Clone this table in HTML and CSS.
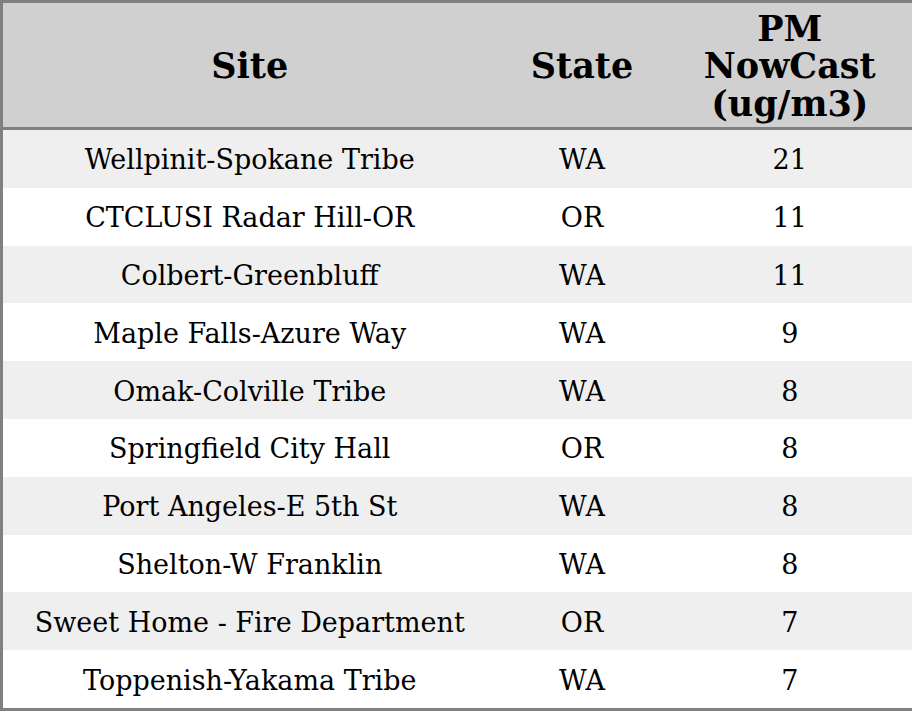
FILE: index.html
```html
<!DOCTYPE html>
<html>
<head>
<meta charset="utf-8">
<link rel="stylesheet" href="styles.css">
</head>
<body>
<table class="aq">
  <colgroup>
    <col class="c-site">
    <col class="c-state">
    <col class="c-pm">
  </colgroup>
  <thead>
    <tr class="head">
      <th>Site</th>
      <th>State</th>
      <th>PM<br>NowCast<br>(ug/m3)</th>
    </tr>
  </thead>
  <tbody>
    <tr><td>Wellpinit-Spokane Tribe</td><td>WA</td><td>21</td></tr>
    <tr><td>CTCLUSI Radar Hill-OR</td><td>OR</td><td>11</td></tr>
    <tr><td>Colbert-Greenbluff</td><td>WA</td><td>11</td></tr>
    <tr><td>Maple Falls-Azure Way</td><td>WA</td><td>9</td></tr>
    <tr><td>Omak-Colville Tribe</td><td>WA</td><td>8</td></tr>
    <tr><td>Springfield City Hall</td><td>OR</td><td>8</td></tr>
    <tr><td>Port Angeles-E 5th St</td><td>WA</td><td>8</td></tr>
    <tr><td>Shelton-W Franklin</td><td>WA</td><td>8</td></tr>
    <tr><td>Sweet Home - Fire Department</td><td>OR</td><td>7</td></tr>
    <tr><td>Toppenish-Yakama Tribe</td><td>WA</td><td>7</td></tr>
  </tbody>
</table>
</body>
</html>
```
FILE: styles.css
```css
html, body {
  margin: 0;
  padding: 0;
  background: #ffffff;
}

.aq {
  width: 912px;
  height: 711px;
  border-collapse: collapse;
  border: 3px solid #808080;
  font-family: "DejaVu Serif", serif;
  color: #000;
  table-layout: fixed;
}

.c-site { width: 495px; }
.c-state { width: 171px; }
.c-pm { width: 246px; }

.aq th {
  background: #d0d0d0;
  font-size: 35px;
  font-weight: bold;
  line-height: 37.5px;
  text-align: center;
  vertical-align: middle;
  padding: 2px 0 0 0;
  border-bottom: 3px solid #808080;
}

.head {
  height: 127px;
}

.aq td {
  font-size: 27px;
  text-align: center;
  vertical-align: middle;
  padding: 2px 0 0 0;
  height: 55px;
}

.aq tbody tr:nth-child(odd) td {
  background: #efefef;
}

.aq tbody tr:nth-child(even) td {
  background: #ffffff;
}
```
